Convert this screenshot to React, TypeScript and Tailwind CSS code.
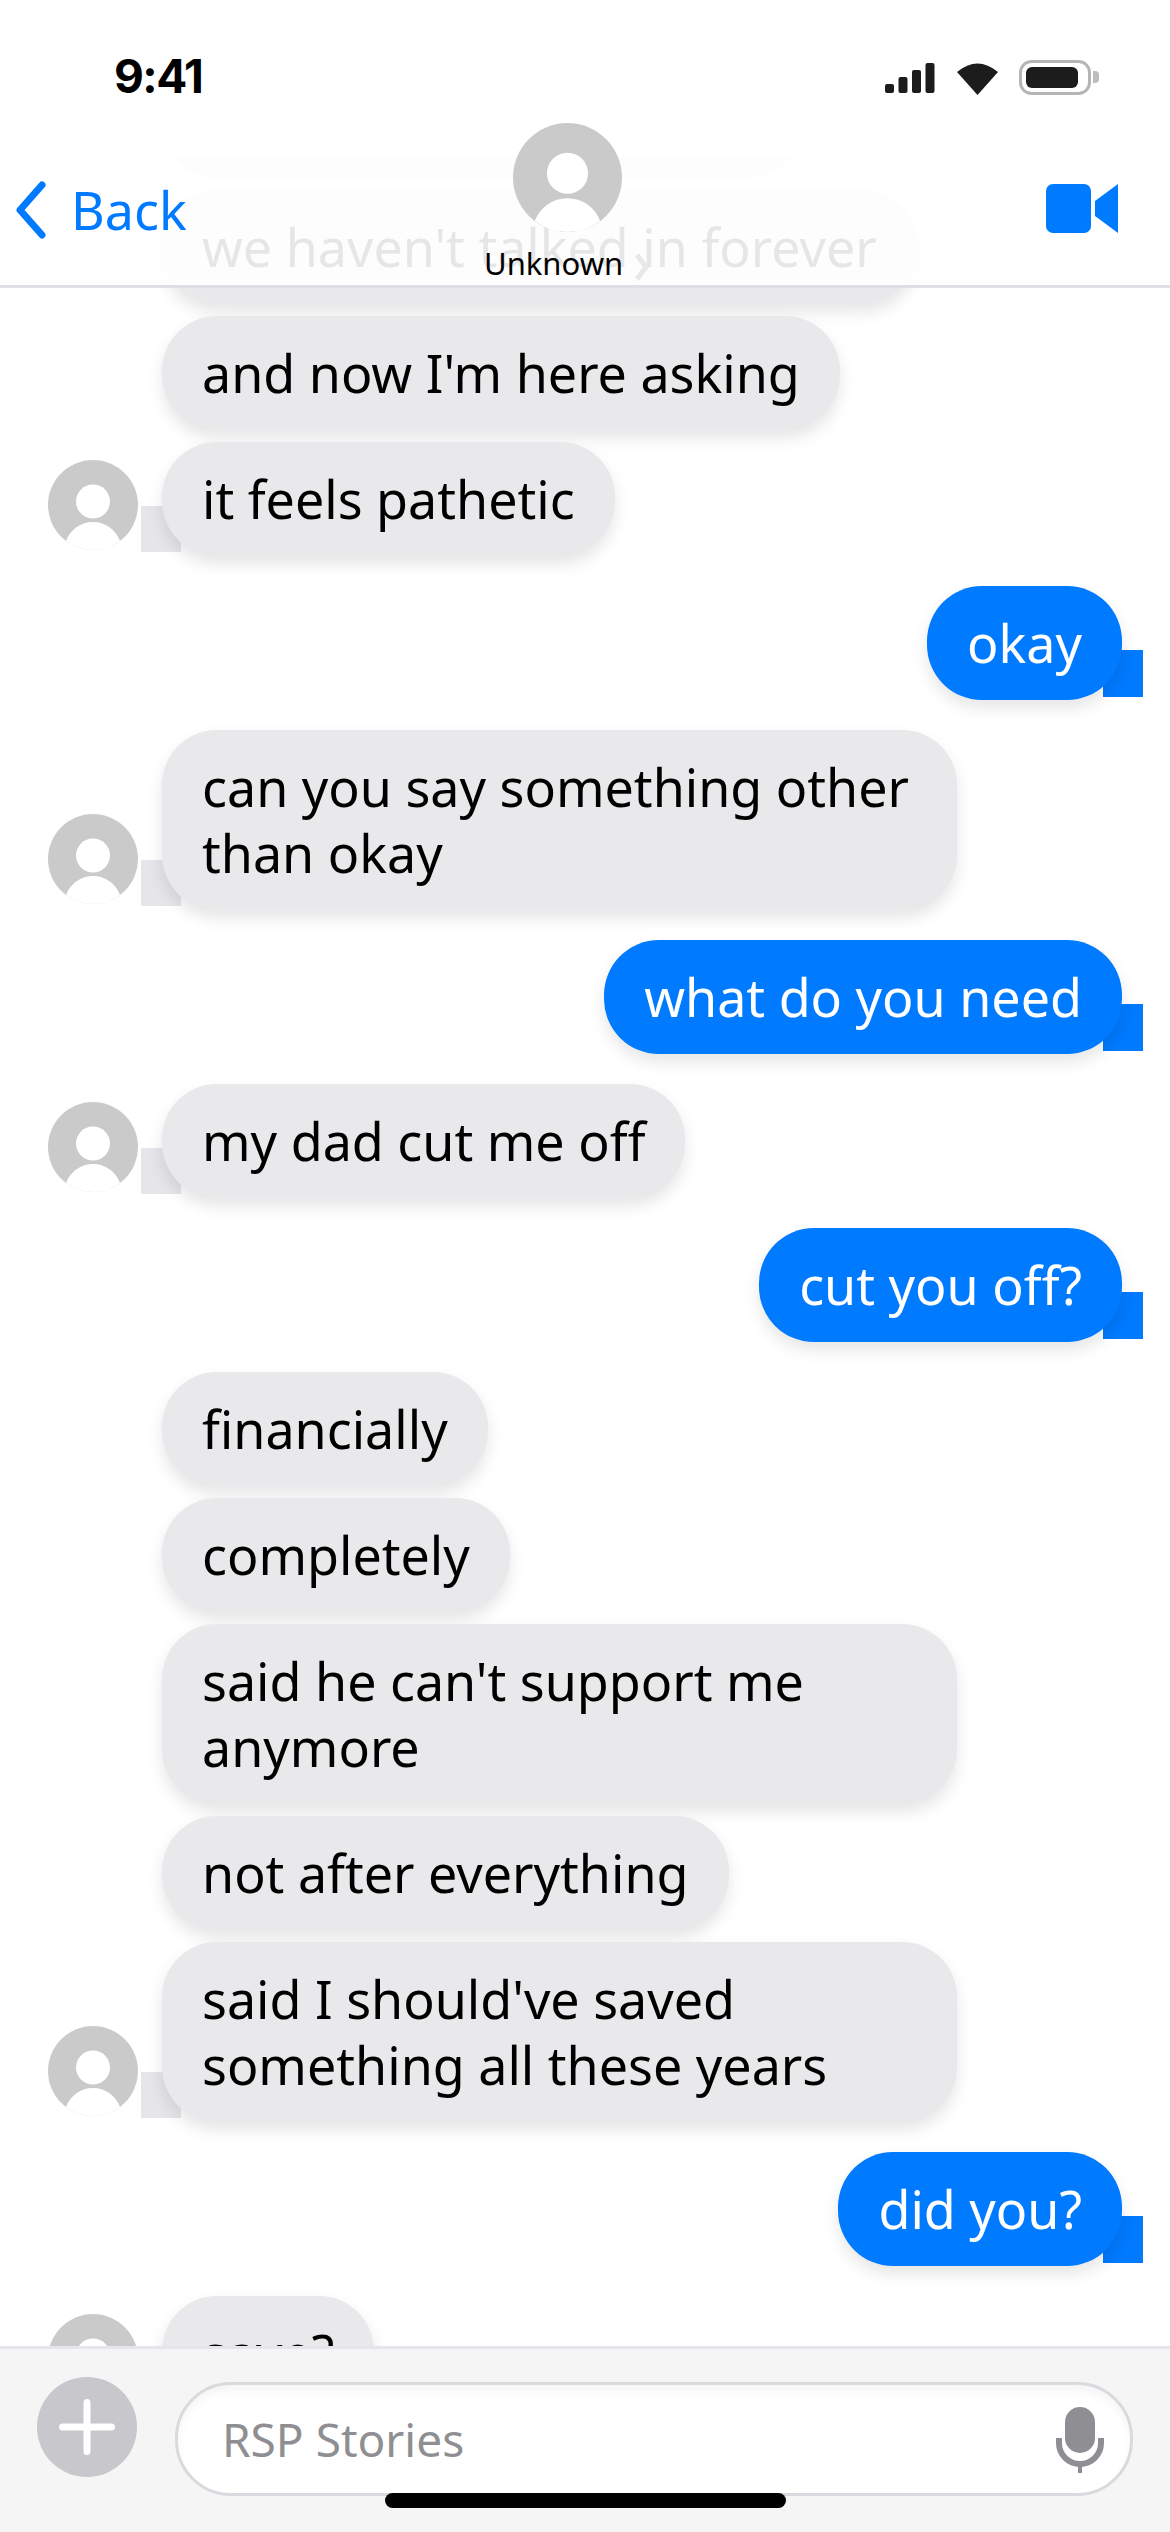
import React from "react";

function Avatar({ className }: { className: string }) {
  return (
    <svg viewBox="0 0 90 90" className={className}>
      <circle cx="45" cy="45" r="45" fill="#cacaca" />
      <circle cx="45" cy="41.5" r="17" fill="#fff" />
      <path d="M18 81 A28.7 28.7 0 0 1 72 81 A45 45 0 0 1 18 81 Z" fill="#fff" />
    </svg>
  );
}

type Msg = { t: string[]; me?: boolean; avatar?: boolean; gap?: boolean };

const msgs: Msg[] = [
  { t: ["we haven't talked in forever"] },
  { t: ["and now I'm here asking"] },
  { t: ["it feels pathetic"], avatar: true },
  { t: ["okay"], me: true, gap: true },
  { t: ["can you say something other", "than okay"], avatar: true, gap: true },
  { t: ["what do you need"], me: true, gap: true },
  { t: ["my dad cut me off"], avatar: true, gap: true },
  { t: ["cut you off?"], me: true, gap: true },
  { t: ["financially"], gap: true },
  { t: ["completely"] },
  { t: ["said he can't support me", "anymore"] },
  { t: ["not after everything"] },
  { t: ["said I should've saved", "something all these years"], avatar: true },
  { t: ["did you?"], me: true, gap: true },
  { t: ["save?"], avatar: true, gap: true },
];

function Row({ m }: { m: Msg }) {
  if (m.me) {
    return (
      <div className={`flex justify-end pr-[48px] ${m.gap ? "mt-[30px]" : "mt-[12px]"}`}>
        <div className="relative">
          <div className="absolute right-[-21px] bottom-[3px] w-[40px] h-[47px] bg-[#007aff]" />
          <div className="relative rounded-[55px] bg-[#007aff] text-white px-[40px] py-[24px] text-[52px] leading-[66px] shadow-[0_8px_16px_rgba(0,0,0,0.1)]">
            {m.t.map((l) => (
              <div key={l} className="whitespace-pre">{l}</div>
            ))}
          </div>
        </div>
      </div>
    );
  }
  const wide = m.t.length > 1;
  return (
    <div className={`flex items-end pl-[48px] gap-[24px] ${m.gap ? "mt-[30px]" : "mt-[12px]"}`}>
      <div className="w-[90px] shrink-0 mb-[6px]">
        {m.avatar && <Avatar className="block w-[90px] h-[90px]" />}
      </div>
      <div className="relative">
        {m.avatar && <div className="absolute left-[-21px] bottom-[4px] w-[40px] h-[46px] bg-[#e5e5ea]" />}
        <div
          className={`relative rounded-[55px] bg-[#e9e9eb] text-black px-[40px] py-[24px] text-[52px] leading-[66px] shadow-[0_8px_16px_rgba(0,0,0,0.1)] ${wide ? "w-[795px]" : ""}`}
        >
          {m.t.map((l) => (
            <div key={l} className="whitespace-pre">{l}</div>
          ))}
        </div>
      </div>
    </div>
  );
}

export default function App() {
  return (
    <div className="relative w-[1170px] h-[2532px] overflow-hidden bg-white flex flex-col font-['Noto_Sans',sans-serif]">
      <div className="flex-1 min-h-0 overflow-hidden">
        <div className="ml-[162px] w-[640px] h-[120px] mt-[58px] rounded-[55px] bg-[#e9e9eb]" />
        <div className="mt-[10px]">
          {msgs.map((m) => (
            <Row key={m.t[0]} m={m} />
          ))}
        </div>
      </div>

      {/* header overlay */}
      <div className="absolute top-0 left-0 w-full">
        <div className="h-[157px] bg-white pl-[114px] pt-[48px] relative">
          <div className="font-['Inter',sans-serif] font-bold text-[46px] leading-[56px] tracking-[-1.5px] text-black">9:41</div>
          <svg className="absolute left-[885px] top-[60px]" width="220" height="40" viewBox="0 0 220 40">
            <g fill="#1c1c1c">
              <rect x="0" y="24" width="9" height="9" rx="2" />
              <rect x="13.5" y="17" width="9" height="16" rx="2" />
              <rect x="27" y="10" width="9" height="23" rx="2" />
              <rect x="40.5" y="3" width="9" height="30" rx="2" />
              <path d="M72 12 Q92.5 -5 113 12 L92.5 35 Z" />
            </g>
            <rect x="135.5" y="1.5" width="69" height="32" rx="11" fill="none" stroke="#b5b5b5" strokeWidth="3" />
            <rect x="141" y="7" width="52" height="21" rx="6" fill="#1c1c1c" />
            <path d="M208 11 h2 a4 4 0 0 1 4 4 v4 a4 4 0 0 1 -4 4 h-2 Z" fill="#bdbdbd" />
          </svg>
        </div>
        <div className="relative h-[128px] bg-white/90 flex items-start justify-between pl-[15px] pr-[52px] pt-[24px]">
          <div className="flex items-center gap-[24px] h-[58px]">
            <svg width="32" height="58" viewBox="0 0 32 58" fill="none">
              <path d="M27 4 L5 29 L27 54" stroke="#007aff" strokeWidth="7" strokeLinecap="round" strokeLinejoin="round" />
            </svg>
            <span className="text-[#007aff] text-[52px] leading-[58px]">Back</span>
          </div>
          <svg width="72" height="49" viewBox="0 0 72 49" className="mt-[3px]">
            <rect x="0" y="0" width="45" height="49" rx="7" fill="#007aff" />
            <path d="M49 17 L72 0 V49 L49 32 Z" fill="#007aff" />
          </svg>
        </div>
        <div className="h-[3px] bg-[#dedee3]" />
        <Avatar className="absolute left-[513px] top-[123px] w-[109px] h-[109px]" />
        <div className="absolute left-[484px] top-[243px] text-[31px] leading-[40px] text-black">Unknown</div>
        <svg className="absolute left-[634px] top-[253px]" width="16" height="28" viewBox="0 0 16 28" fill="none">
          <path d="M3 2 L12 14 L3 26" stroke="#e8e8e8" strokeWidth="5" />
        </svg>
      </div>

      {/* composer */}
      <div className="relative z-10 h-[186px] shrink-0 bg-[#f5f5f5] border-t-[3px] border-[#e5e5ea] flex items-start pl-[37px] pr-[37px] pt-[28px] gap-[38px]">
        <div className="w-[100px] h-[100px] rounded-full bg-[#c7c7cc] flex items-center justify-center shrink-0">
          <svg width="56" height="56" viewBox="0 0 56 56">
            <rect x="24.5" y="0" width="7" height="56" rx="3.5" fill="#fff" />
            <rect x="0" y="24.5" width="56" height="7" rx="3.5" fill="#fff" />
          </svg>
        </div>
        <div className="flex-1 h-[114px] mt-[5px] rounded-[56px] border-[3px] border-[#d9d9de] bg-white shadow-[inset_0_6px_8px_rgba(0,0,0,0.04)] flex items-center justify-between pl-[44px] pr-[26px]">
          <span className="text-[46px] leading-[60px] text-[#8e8e93]">RSP Stories</span>
          <svg width="48" height="66" viewBox="0 0 48 66" fill="none" className="mt-[2px]">
            <rect x="9" y="0" width="30" height="46" rx="15" fill="#8e8e93" />
            <path d="M3 31 V36 A21 21 0 0 0 45 36 V31" stroke="#8e8e93" strokeWidth="6" />
            <rect x="22" y="56" width="4" height="10" fill="#8e8e93" />
          </svg>
        </div>
      </div>

      <div className="absolute z-20 left-[385px] top-[2493px] w-[401px] h-[15px] rounded-[8px] bg-black" />
    </div>
  );
}
